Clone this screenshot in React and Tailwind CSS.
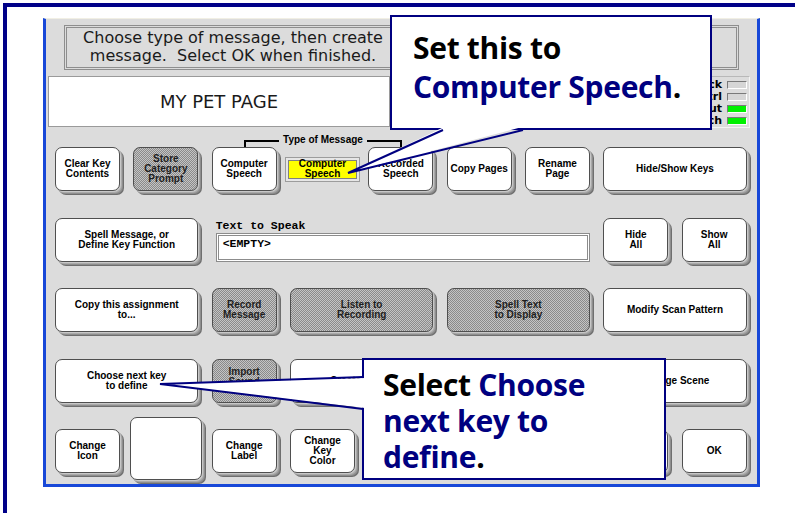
const keyBase =
  'flex items-center justify-center text-center rounded-[7px] border border-[#4f4f4f] font-bold text-[10px] leading-[10px] font-["Liberation_Sans",Arial,sans-serif] shadow-[1px_1px_0_#c8c8c8,2px_2px_0_#a9a9a9,3px_3px_0_#8e8e8e,4px_4px_0_#6f6f6f]';
const whiteKey = 'bg-white text-black';
const grayKey =
  'bg-[image:repeating-conic-gradient(#8a8a8a_0%_25%,#c4c4c4_0%_50%)] bg-[length:2px_2px] text-[#1e1e1e]';

function Key({ children, gray, className = '' }) {
  return <div className={[keyBase, gray ? grayKey : whiteKey, className].join(' ')}>{children}</div>;
}

function Status({ label, on }) {
  return (
    <div className="flex h-[12px] items-center justify-end gap-[5px]">
      <span className="font-['DejaVu_Sans',Verdana,sans-serif] text-[11px] font-bold leading-[12px] text-black">{label}</span>
      <div
        className={
          'h-[8px] w-[20px] border border-t-[#7a7a7a] border-l-[#7a7a7a] border-b-white border-r-white ' +
          (on ? 'bg-[#00f000]' : 'bg-[#d6d6d6]')
        }
      />
    </div>
  );
}

export default function App() {
  return (
    <div className="relative h-[513px] w-[795px] overflow-hidden bg-white pl-[3px] pt-[3px] font-['Liberation_Sans',Arial,sans-serif]">
      {/* page frame */}
      <div className="h-[520px] border-l-4 border-t-4 border-[#000088] pl-[36px] pt-[11px]">
        {/* app panel */}
        <div className="h-[469px] w-[717px] border-x-[3px] border-b-[3px] border-t border-[#1848d8] border-t-[#f1efe4] bg-[#dcdcdc]">
          {/* instructions */}
          <div className="ml-[18px] mt-[6px] h-[45px] w-[675px] border-[3px] border-double border-[#8e8e8e] bg-[#dcdcdc]">
            <p className="w-[332px] pt-[1px] text-center font-['DejaVu_Sans',Verdana,sans-serif] text-[16px] leading-[18px] text-[#1a1a1a]">
              Choose type of message, then create message.&nbsp; Select OK when finished.
            </p>
          </div>

          {/* page name + status */}
          <div className="mt-[6px] flex h-[52px]">
            <div className="ml-[2px] flex h-[51px] w-[342px] items-center justify-center border border-[#9a9a9a] bg-white font-['DejaVu_Sans',Verdana,sans-serif] text-[18px] text-[#1a1a1a]">
              MY PET PAGE
            </div>
            <div className="ml-auto mr-[7px] w-[300px] border border-[#b8b8b8] border-r-[#f4f4f4] border-b-[#f4f4f4] pr-[2px] pt-[2px]">
              <Status label="Lock" />
              <Status label="Ctrl" />
              <Status label="Input" on />
              <Status label="Switch" on />
            </div>
          </div>

          {/* type of message bracket */}
          <div className="ml-[198px] mt-[6px] flex h-[13px] w-[158px]">
            <div className="mt-[6px] h-[7px] flex-1 border-l-2 border-t-2 border-black" />
            <span className="px-[4px] text-[10px] font-bold leading-[12px] text-black">Type of Message</span>
            <div className="mt-[6px] h-[7px] flex-1 border-r-2 border-t-2 border-black" />
          </div>

          {/* keys */}
          <div className="ml-[9px] grid grid-cols-[repeat(9,65px)] grid-rows-[repeat(5,44px)] gap-x-[13.33px] gap-y-[26.5px]">
            <Key>Clear Key<br />Contents</Key>
            <Key gray>Store<br />Category<br />Prompt</Key>
            <Key>Computer<br />Speech</Key>
            <div className="-mx-[5px] h-[25px] self-center border border-[#9c9c9c] bg-[#e6e6e6] p-[2px]">
              <div className="flex h-full items-center justify-center border border-[#808080] bg-[#ffff00] text-center text-[10px] font-bold leading-[10px] text-black">
                Computer<br />Speech
              </div>
            </div>
            <Key>Recorded<br />Speech</Key>
            <Key>Copy Pages</Key>
            <Key>Rename<br />Page</Key>
            <Key className="col-span-2">Hide/Show Keys</Key>

            <Key className="col-span-2">Spell Message, or<br />Define Key Function</Key>
            <div className="col-span-5 flex flex-col">
              <span className="h-[15px] pl-[4px] font-['Liberation_Mono','DejaVu_Sans_Mono',monospace] text-[11.5px] font-bold leading-[15px] text-black">
                Text to Speak
              </span>
              <div className="ml-[4px] flex-1 border-[3px] border-double border-[#8c8c8c] bg-white px-[4px] pt-[1px] font-['Liberation_Mono','DejaVu_Sans_Mono',monospace] text-[11.5px] font-bold leading-[14px] text-black">
                &lt;EMPTY&gt;
              </div>
            </div>
            <Key>Hide<br />All</Key>
            <Key>Show<br />All</Key>

            <Key className="col-span-2">Copy this assignment<br />to...</Key>
            <Key gray>Record<br />Message</Key>
            <Key gray className="col-span-2">Listen to<br />Recording</Key>
            <Key gray className="col-span-2">Spell Text<br />to Display</Key>
            <Key className="col-span-2">Modify Scan Pattern</Key>

            <Key className="col-span-2">Choose next key<br />to define</Key>
            <Key gray className="pb-[8px]">Import<br />Sound</Key>
            <Key className="col-span-2">Create Scene</Key>
            <Key className="col-span-2" />
            <Key className="col-span-2">Change Scene</Key>

            <Key>Change<br />Icon</Key>
            <Key className="-ml-[3px] -mt-[12px] h-[63px] w-[72px] self-start" />
            <Key>Change<br />Label</Key>
            <Key>Change<br />Key<br />Color</Key>
            <Key />
            <Key />
            <Key />
            <Key />
            <Key>OK</Key>
          </div>
        </div>
      </div>

      {/* callout: computer speech */}
      <div className="absolute left-[390px] top-[15px] h-[115px] w-[322px] border-2 border-[#000080] bg-white pl-[21px] pt-[11px] font-['Open_Sans',sans-serif] text-[30px] font-bold leading-[39px] tracking-[-0.3px] text-black">
        Set this to
        <br />
        <span className="text-[#000080]">Computer Speech</span>.
      </div>

      {/* callout: choose next key */}
      <div className="absolute left-[362px] top-[358px] h-[122px] w-[304px] border-2 border-[#000080] bg-white pl-[19px] pt-[7px] font-['Open_Sans',sans-serif] text-[30px] font-bold leading-[36px] tracking-[-0.3px] text-black">
        Select <span className="text-[#000080]">Choose</span>
        <br />
        <span className="text-[#000080]">next key to</span>
        <br />
        <span className="text-[#000080]">define</span>.
      </div>

      {/* callout tails */}
      <svg className="pointer-events-none absolute left-0 top-0" width="795" height="513">
        <polygon points="444,127 522,127 348,173" fill="white" />
        <polyline points="443,130 348,173 523,130" fill="none" stroke="#000080" strokeWidth="2" />
        <polygon points="365,378 365,408 160,384" fill="white" />
        <polyline points="363,377 160,384 363,409" fill="none" stroke="#000080" strokeWidth="2" />
      </svg>
    </div>
  );
}
